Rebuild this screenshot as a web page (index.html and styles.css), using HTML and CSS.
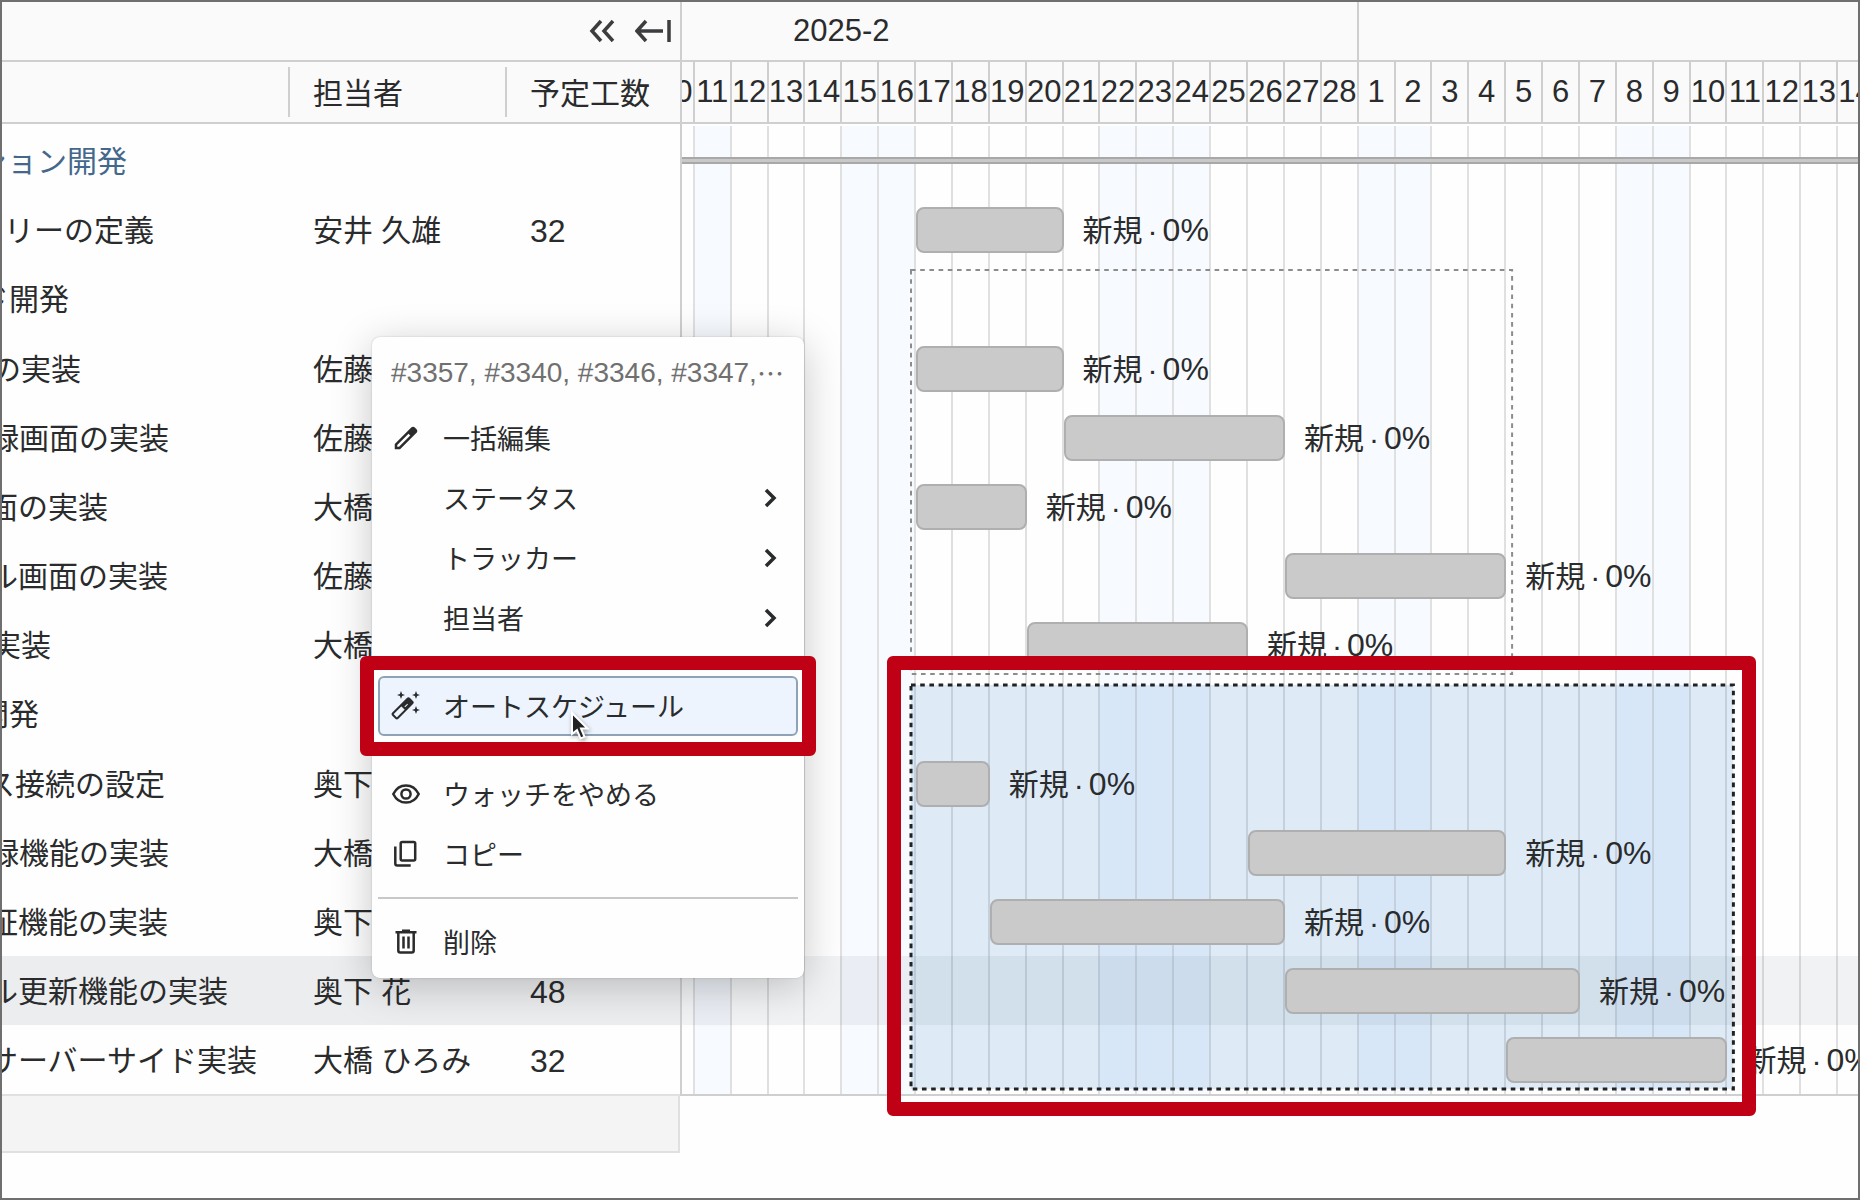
FILE: index.html
```html
<!DOCTYPE html>
<html lang="ja">
<head>
<meta charset="utf-8">
<meta name="viewport" content="width=device-width, initial-scale=1">
<title>ガントチャート</title>
<link rel="stylesheet" href="styles.css">
</head>
<body>
<main class="app">
  <section class="tasks">
    <div class="toolbar">
      <button class="tool" type="button" aria-label="折りたたむ">
        <svg width="28" height="24" viewBox="0 0 28 24"><path d="M13 2 4 12l9 10M25 2l-9 10 9 10"/></svg>
      </button>
      <button class="tool" type="button" aria-label="左端へ移動">
        <svg width="36" height="24" viewBox="0 0 36 24"><path d="M11 2 2 12l9 10M3 12h25M34 1v22"/></svg>
      </button>
    </div>
    <table class="task-table">
      <colgroup><col class="col-title"><col class="col-owner"><col></colgroup>
      <thead>
        <tr>
          <th><div class="head"></div></th>
          <th><div class="head"><span class="head-label">担当者</span></div></th>
          <th><div class="head"><span class="head-label">予定工数</span></div></th>
        </tr>
      </thead>
      <tbody>
        <tr><td><div class="title" style="--end:125px"><a href="#">ション開発</a></div></td><td></td><td></td></tr>
        <tr><td><div class="title" style="--end:152px">トリーの定義</div></td><td>安井 久雄</td><td class="num">32</td></tr>
        <tr class="parent"><td><div class="title" style="--end:67px">ド開発</div></td><td></td><td></td></tr>
        <tr><td><div class="title" style="--end:79px">の実装</div></td><td>佐藤</td><td></td></tr>
        <tr><td><div class="title" style="--end:167px">録画面の実装</div></td><td>佐藤</td><td></td></tr>
        <tr><td><div class="title" style="--end:106px">面の実装</div></td><td>大橋</td><td></td></tr>
        <tr><td><div class="title" style="--end:166px">ル画面の実装</div></td><td>佐藤</td><td></td></tr>
        <tr><td><div class="title" style="--end:49px">実装</div></td><td>大橋</td><td></td></tr>
        <tr class="parent"><td><div class="title" style="--end:37px">開発</div></td><td></td><td></td></tr>
        <tr><td><div class="title" style="--end:163px">ス接続の設定</div></td><td>奥下</td><td></td></tr>
        <tr><td><div class="title" style="--end:167px">録機能の実装</div></td><td>大橋</td><td></td></tr>
        <tr><td><div class="title" style="--end:166px">証機能の実装</div></td><td>奥下</td><td></td></tr>
        <tr class="selected"><td><div class="title" style="--end:226px">ル更新機能の実装</div></td><td>奥下 花</td><td class="num">48</td></tr>
        <tr><td><div class="title" style="--end:255px">サーバーサイド実装</div></td><td>大橋 ひろみ</td><td class="num">32</td></tr>
      </tbody>
    </table>
    <div class="tasks-footer"></div>
  </section>

  <section class="timeline">
    <div class="canvas">
      <div class="months"><div class="month">2025-2</div><div class="month"></div></div>
      <div class="days">
        <span class="day first">10</span><span class="day">11</span><span class="day">12</span><span class="day">13</span><span class="day">14</span><span class="day">15</span><span class="day">16</span><span class="day">17</span><span class="day">18</span><span class="day">19</span><span class="day">20</span><span class="day">21</span><span class="day">22</span><span class="day">23</span><span class="day">24</span><span class="day">25</span><span class="day">26</span><span class="day">27</span><span class="day">28</span><span class="day">1</span><span class="day">2</span><span class="day">3</span><span class="day">4</span><span class="day">5</span><span class="day">6</span><span class="day">7</span><span class="day">8</span><span class="day">9</span><span class="day">10</span><span class="day">11</span><span class="day">12</span><span class="day">13</span><span class="day">14</span>
      </div>
      <div class="chart">
        <div class="stripes">
          <i class="first"></i><i class="off"></i><i></i><i></i><i></i><i class="off"></i><i class="off"></i><i></i><i></i><i></i><i></i><i></i><i class="off"></i><i class="off"></i><i class="off"></i><i></i><i></i><i></i><i></i><i class="off"></i><i class="off"></i><i></i><i></i><i></i><i></i><i></i><i class="off"></i><i class="off"></i><i></i><i></i><i></i><i></i><i></i>
        </div>
        <div class="groups">
          <svg class="group" style="grid-area:3/17/9/33"><rect width="100%" height="100%"/></svg>
          <svg class="group active" style="grid-area:9/17/15/39"><rect width="100%" height="100%"/></svg>
        </div>
        <div class="lanes">
          <div class="lane"><div class="project"></div></div>
          <div class="lane"><div class="bar" style="grid-column:17/21"></div><div class="label" style="grid-column:21/-1">新規<span class="dot">·</span><span class="num">0%</span></div></div>
          <div class="lane parent"></div>
          <div class="lane"><div class="bar" style="grid-column:17/21"></div><div class="label" style="grid-column:21/-1">新規<span class="dot">·</span><span class="num">0%</span></div></div>
          <div class="lane"><div class="bar" style="grid-column:21/27"></div><div class="label" style="grid-column:27/-1">新規<span class="dot">·</span><span class="num">0%</span></div></div>
          <div class="lane"><div class="bar" style="grid-column:17/20"></div><div class="label" style="grid-column:20/-1">新規<span class="dot">·</span><span class="num">0%</span></div></div>
          <div class="lane"><div class="bar" style="grid-column:27/33"></div><div class="label" style="grid-column:33/-1">新規<span class="dot">·</span><span class="num">0%</span></div></div>
          <div class="lane"><div class="bar" style="grid-column:20/26"></div><div class="label" style="grid-column:26/-1">新規<span class="dot">·</span><span class="num">0%</span></div></div>
          <div class="lane parent"></div>
          <div class="lane"><div class="bar" style="grid-column:17/19"></div><div class="label" style="grid-column:19/-1">新規<span class="dot">·</span><span class="num">0%</span></div></div>
          <div class="lane"><div class="bar" style="grid-column:26/33"></div><div class="label" style="grid-column:33/-1">新規<span class="dot">·</span><span class="num">0%</span></div></div>
          <div class="lane"><div class="bar" style="grid-column:19/27"></div><div class="label" style="grid-column:27/-1">新規<span class="dot">·</span><span class="num">0%</span></div></div>
          <div class="lane hovered"><div class="bar" style="grid-column:27/35"></div><div class="label" style="grid-column:35/-1">新規<span class="dot">·</span><span class="num">0%</span></div></div>
          <div class="lane"><div class="bar" style="grid-column:33/39"></div><div class="label" style="grid-column:39/-1">新規<span class="dot">·</span><span class="num">0%</span></div></div>
        </div>
        <div class="groups marks">
          <div class="mark mark-group" style="grid-area:9/17/15/39"></div>
        </div>
      </div>
    </div>
  </section>

  <nav class="menu" aria-label="コンテキストメニュー">
    <div class="menu-title">#3357, #3340, #3346, #3347,<span class="more">…</span></div>
    <button class="item" type="button">
      <svg class="icon" viewBox="0 0 24 24"><path class="solid" fill-rule="evenodd" d="M3 21v-4.25L16.2 3.58q.3-.28.66-.43.36-.15.76-.15t.78.15q.37.15.65.45L20.43 5q.3.28.43.65.14.38.14.75 0 .4-.14.76-.13.37-.43.67L7.25 21zM5 19h1.4l9-9L14 8.6l-9 9z"/></svg>
      <span class="name">一括編集</span>
    </button>
    <button class="item" type="button"><span class="icon"></span><span class="name">ステータス</span><svg class="chevron" width="14" height="20" viewBox="0 0 14 20"><path d="m3 2 8 8-8 8"/></svg></button>
    <button class="item" type="button"><span class="icon"></span><span class="name">トラッカー</span><svg class="chevron" width="14" height="20" viewBox="0 0 14 20"><path d="m3 2 8 8-8 8"/></svg></button>
    <button class="item" type="button"><span class="icon"></span><span class="name">担当者</span><svg class="chevron" width="14" height="20" viewBox="0 0 14 20"><path d="m3 2 8 8-8 8"/></svg></button>
    <hr>
    <div class="marked">
      <button class="item current" type="button">
        <svg class="icon" viewBox="0 0 30 30"><g transform="translate(12 17) rotate(-45)"><rect x="-12" y="-3.300" width="23" height="6.600" rx="1.200" stroke-width="2"/><path class="solid" d="M0-3.300h11v6.600H0z"/><path class="gap" d="M2 .5h4"/></g><path class="solid" d="m10 0 1.100 2.900L14 4l-2.900 1.100L10 8 8.900 5.100 6 4l2.900-1.100zM25 0l1.100 2.900L29 4l-2.900 1.100L25 8l-1.100-2.900L21 4l2.900-1.100zM25 15l1.100 2.900L29 19l-2.900 1.100L25 23l-1.100-2.900L21 19l2.900-1.100z"/></svg>
        <span class="name">オートスケジュール</span>
      </button>
      <div class="mark mark-item"></div>
      <svg class="pointer" width="22" height="32" viewBox="0 0 22 32"><path d="M3 3v21l5-4 3.500 8.500 4-1.700L12 18.500h6.500z"/></svg>
    </div>
    <hr>
    <button class="item" type="button">
      <svg class="icon" viewBox="0 0 30 30"><path d="M2.300 15C5 9.500 9.500 6.400 15 6.400s10 3.100 12.700 8.600C25 20.500 20.500 23.600 15 23.600S5 20.500 2.300 15z"/><circle cx="15" cy="15" r="4.600"/></svg>
      <span class="name">ウォッチをやめる</span>
    </button>
    <button class="item" type="button">
      <svg class="icon" viewBox="0 0 30 30"><rect x="9.700" y="2.900" width="14.500" height="18.600" rx="1.500"/><path d="M4.300 7.500v17q0 2 2 2h13.400"/></svg>
      <span class="name">コピー</span>
    </button>
    <hr>
    <button class="item" type="button">
      <svg class="icon" viewBox="0 0 30 30"><path d="M4.500 5.300h21M11 3.700h8M7.300 5.500v18q0 2 2 2h11.400q2 0 2-2v-18M12.500 9.500v12M17.500 9.500v12"/></svg>
      <span class="name">削除</span>
    </button>
  </nav>
</main>
</body>
</html>
```

FILE: styles.css
```css
* { box-sizing: border-box; }

:root {
  --row: 69px;
  --parent-row: 70px;
  --ink: #2a2b2c;
  --rule: #cfcfcf;
  --red: #c00014;
}

body {
  margin: 0;
  background: #fefefe;
  color: var(--ink);
  font-family: "Liberation Sans", "Noto Sans CJK JP", sans-serif;
  font-size: 30px;
  line-height: 40px;
}

.app {
  position: relative;
  display: flex;
  align-items: flex-start;
  min-height: 100vh;
  border: 2px solid #706f6f;
}

.num { font-size: 32px; }

/* task list */
.tasks {
  flex: 0 0 678px;
  overflow: hidden;
}

.toolbar {
  display: flex;
  justify-content: flex-end;
  align-items: center;
  gap: 19px;
  height: 60px;
  padding-right: 9px;
  background: #fafafa;
  border-bottom: 2px solid var(--rule);
}

.tool {
  display: flex;
  padding: 0;
  border: 0;
  background: none;
}

.tool path {
  fill: none;
  stroke: #3c3d3e;
  stroke-width: 3.5;
}

.task-table {
  width: 100%;
  table-layout: fixed;
  border-collapse: collapse;
  white-space: nowrap;
}

.col-title { width: 286px; }
.col-owner { width: 217px; }

.task-table th {
  padding: 0 0 2px;
  font-weight: 400;
  text-align: left;
}

.head {
  display: flex;
  align-items: center;
  height: 62px;
  background: #fafafa;
  border-bottom: 2px solid var(--rule);
}

.head-label {
  padding: 7px 0 3px 23px;
  border-left: 2px solid var(--rule);
}

.task-table td {
  height: var(--row);
  padding: 2px 0 0 25px;
}

.task-table .parent td { height: var(--parent-row); }

.task-table td:first-child { padding-left: 0; }

.title {
  display: flex;
  justify-content: flex-end;
  width: var(--end);
  overflow: hidden;
}

.title a {
  color: #44688c;
  text-decoration: none;
}

.selected { background: #ecedef; }

.tasks-footer {
  height: 59px;
  background: #f4f4f4;
  border: solid #e0e0e0;
  border-width: 2px 2px 2px 0;
}

/* timeline */
.timeline {
  flex: 1;
  min-width: 0;
  overflow-x: clip;
  border-left: 2px solid var(--rule);
}

.canvas {
  width: calc(100% + 373px);
  margin-left: -356px;
}

.months {
  display: grid;
  grid-template-columns: 28fr 14fr;
  height: 60px;
  background: #fafafa;
  border-bottom: 2px solid var(--rule);
}

.month {
  display: flex;
  align-items: center;
  justify-content: center;
  font-size: 31px;
  border-right: 2px solid var(--rule);
}

.days, .stripes, .groups, .lane {
  display: grid;
  grid-template-columns: repeat(42, minmax(0, 1fr));
}

.days {
  height: 62px;
  margin-bottom: 2px;
  background: #fafafa;
  border-bottom: 2px solid var(--rule);
}

.day {
  display: flex;
  align-items: center;
  justify-content: center;
  font-size: 31px;
  border-right: 2px solid var(--rule);
}

.first { grid-column: 10; }

.chart {
  position: relative;
  border-bottom: 2px solid var(--rule);
}

.stripes {
  position: absolute;
  inset: 0;
}

.stripes i { border-right: 2px solid #e0e0e0; }
.stripes .off { background: #f7faff; }

.groups {
  position: absolute;
  inset: 0;
  grid-template-rows:
    repeat(2, var(--row)) var(--parent-row)
    repeat(5, var(--row)) var(--parent-row)
    repeat(5, var(--row));
}

.marks { z-index: 2; }

.group {
  width: calc(100% + 11px);
  height: calc(100% - 11px);
  margin: 6px -6px 5px -5px;
  overflow: visible;
}

.group rect {
  fill: none;
  stroke: #8c8c8c;
  stroke-width: 2;
  stroke-dasharray: 4.6 4.6;
}

.group.active rect {
  fill: rgb(40 125 210 / 15%);
  stroke: #222;
  stroke-width: 3;
}

.lanes { position: relative; }

.lane {
  align-items: center;
  height: var(--row);
}

.lane.parent { height: var(--parent-row); }
.lane.hovered { background: rgb(30 50 70 / 6%); }

.bar {
  height: 46px;
  background: #cacaca;
  border: 2px solid #afafaf;
  border-radius: 8px;
}

.label {
  padding: 2px 0 0 19px;
  white-space: nowrap;
}

.dot { margin: 0 5px; }

.project {
  grid-column: 1 / -1;
  height: 7px;
  background: #c8c8c8;
  border: solid #a8a8a8;
  border-width: 2px 0;
}

/* context menu */
.menu {
  position: absolute;
  z-index: 3;
  top: 335px;
  left: 370px;
  width: 432px;
  padding: 6px;
  background: #fefefe;
  border-radius: 8px;
  box-shadow: 0 8px 40px rgb(0 0 0 / 22%), 0 0 2px rgb(0 0 0 / 20%);
  font-size: 27px;
}

.menu-title {
  display: flex;
  align-items: center;
  height: 60px;
  margin-bottom: 5px;
  padding-left: 13px;
  color: #707070;
  font-size: 28px;
  white-space: nowrap;
}

.more { font: 27px/40px "Noto Sans CJK JP", sans-serif; }

.item {
  display: flex;
  align-items: center;
  width: 100%;
  height: 60px;
  padding: 0 19px 0 11px;
  border: 2px solid transparent;
  border-radius: 6px;
  background: none;
  color: inherit;
  font: inherit;
  text-align: left;
}

.item.current {
  background: #edf4fd;
  border-color: #8fa3b8;
}

.name { padding-top: 4px; }

.icon {
  flex: none;
  width: 30px;
  height: 30px;
  margin-right: 22px;
  fill: none;
  stroke: var(--ink);
  stroke-width: 2.5;
}

.solid {
  fill: var(--ink);
  stroke: none;
}

.gap { stroke: #edf4fd; stroke-width: 1; }

.chevron {
  margin-left: auto;
  fill: none;
  stroke: var(--ink);
  stroke-width: 3.5;
}

.menu hr {
  height: 2px;
  margin: 13px 0;
  border: 0;
  background: #c8c8c8;
}

.marked { position: relative; }

.pointer {
  position: absolute;
  top: 34px;
  left: 191px;
  fill: #222;
  stroke: #fff;
  stroke-width: 2;
  filter: drop-shadow(1px 2px 2px rgb(0 0 0 / 35%));
}

/* highlight frames */
.mark {
  border: 14px solid var(--red);
  border-radius: 6px;
  pointer-events: none;
}

.mark-item {
  position: absolute;
  inset: -20px -18px;
}

.mark-group { margin: -23px -29px -22px -29px; }
```
